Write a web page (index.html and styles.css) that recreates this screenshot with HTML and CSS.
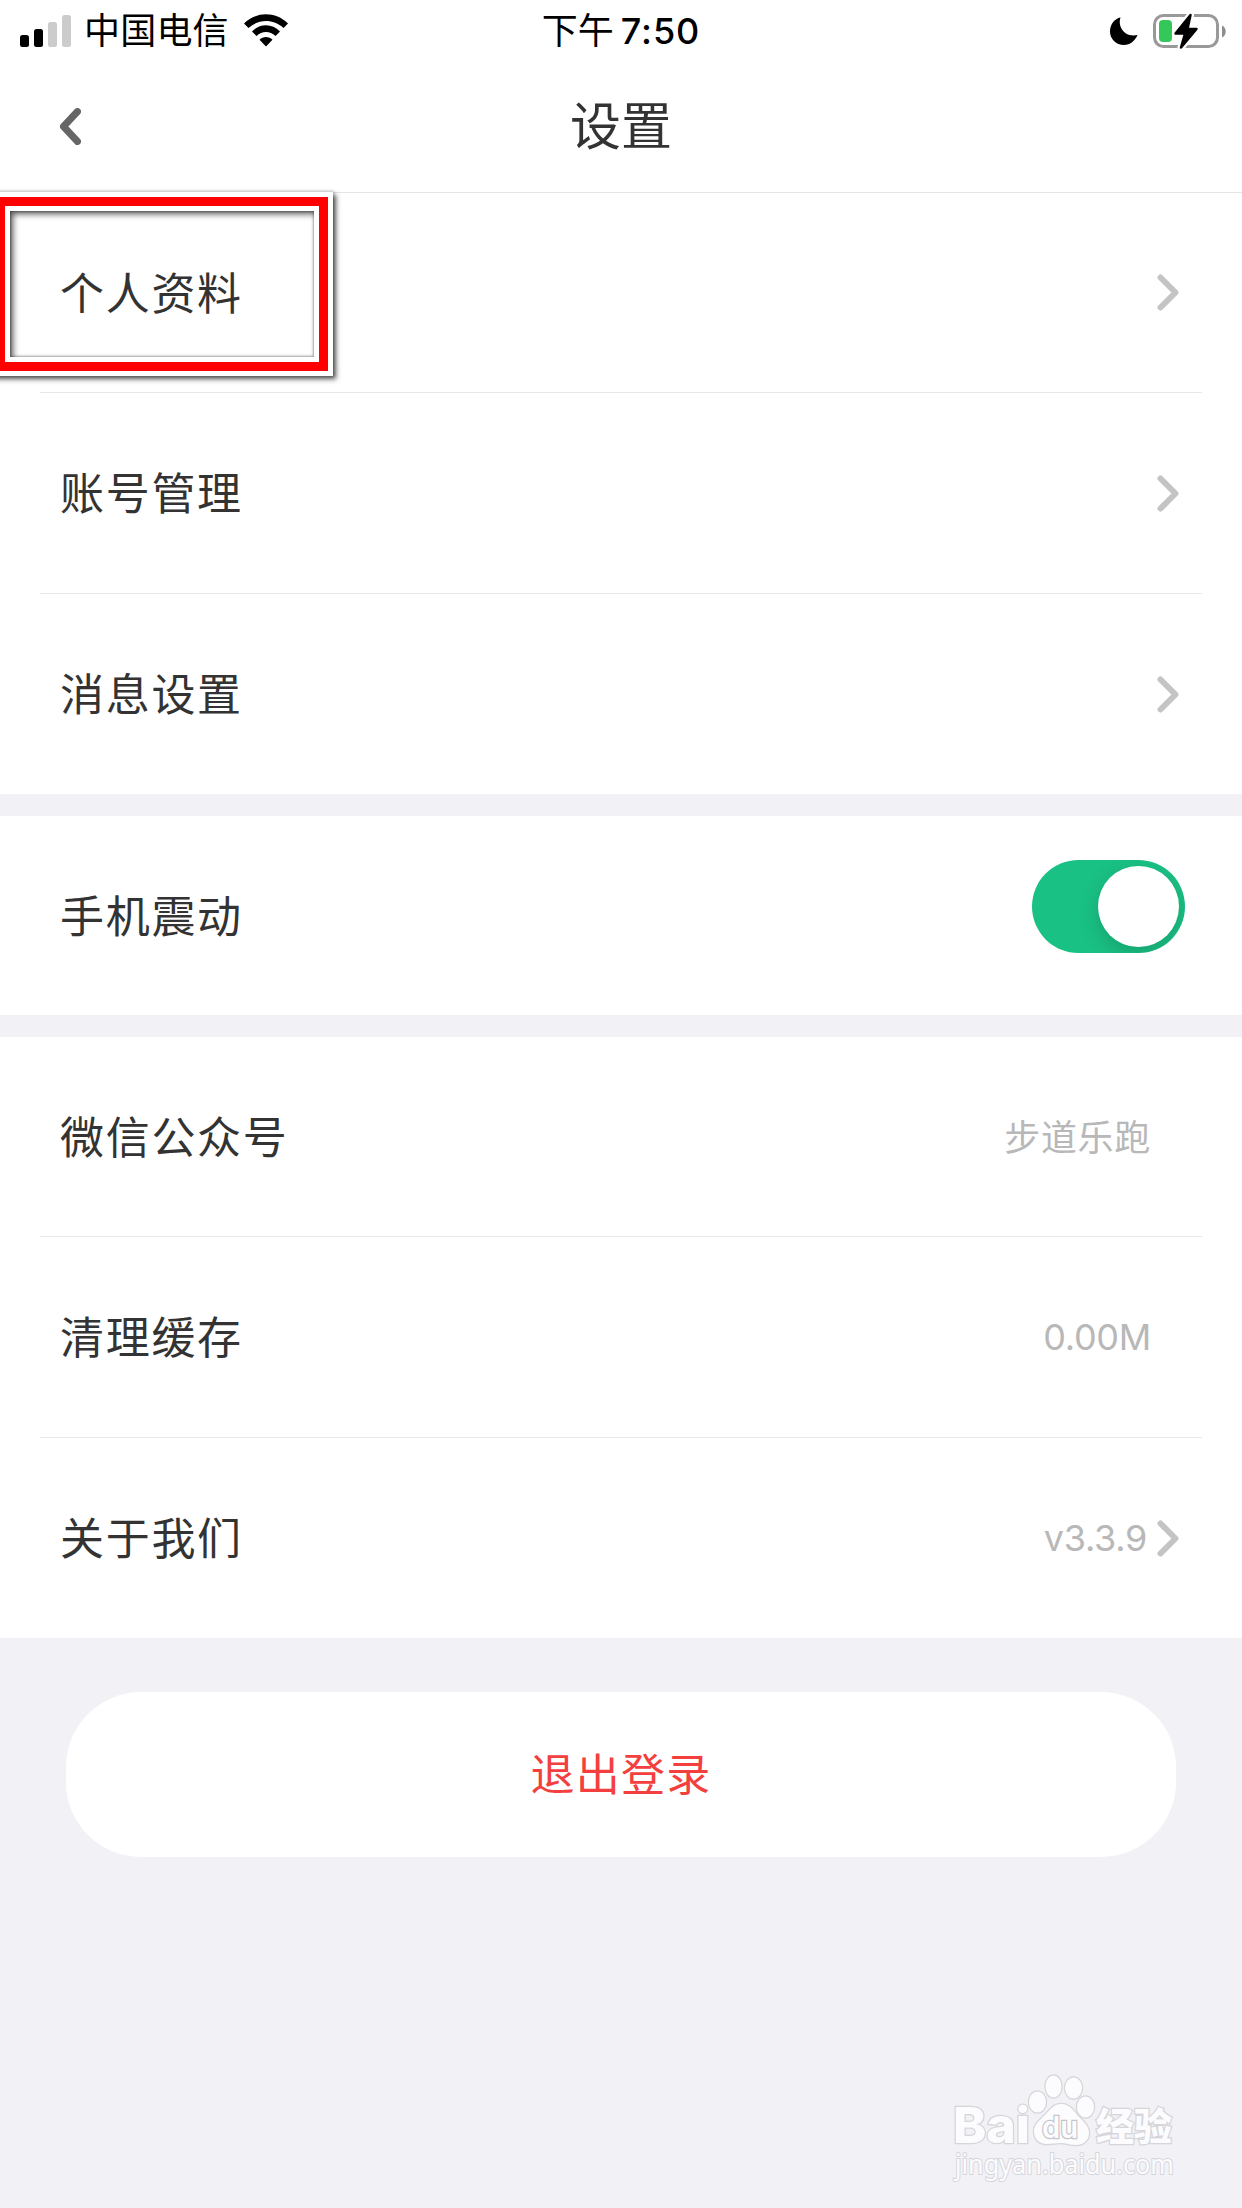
FILE: index.html
```
<!DOCTYPE html>
<html lang="zh-CN">
<head>
  <meta charset="UTF-8">
  <meta name="viewport" content="width=device-width, initial-scale=1.0">
  <title>设置</title>
  <link rel="stylesheet" href="styles.css">
</head>
<body>
  <div class="status-bar">
    <div class="status-left">
      <svg class="signal" width="51" height="32" viewBox="0 0 51 32">
        <rect x="0" y="20" width="9" height="12" rx="2.5"/>
        <rect x="14" y="14" width="9" height="18" rx="2.5"/>
        <rect class="off" x="28" y="7" width="9" height="25" rx="2.5"/>
        <rect class="off" x="42" y="0" width="9" height="32" rx="2.5"/>
      </svg>
      <span class="carrier">中国电信</span>
      <svg class="wifi" width="46" height="33" viewBox="0 0 46 33">
        <path d="M1 9.5C13.500-2.700 32.500-2.700 45 9.500L40.500 14C30.500 4.800 15.500 4.800 5.500 14Z"/>
        <path d="M9 17.500C17 9 29 9 37 17.500L32.500 22C27 16.800 19 16.800 13.500 22Z"/>
        <path d="M16.500 25.700C20 22 26 22 29.500 25.700L23 32.500Z"/>
      </svg>
    </div>
    <div class="status-time">下午<span>7:50</span></div>
    <div class="status-right">
      <svg width="28" height="28" viewBox="0 0 28 28">
        <path d="M10.500 0.500C7.500 9 14 21 27.500 18C25 24 20 28 14 28C6 28 0 22 0 14.500C0 7.500 4.500 1.500 10.500 0.500Z"/>
      </svg>
      <svg width="74" height="36" viewBox="0 0 74 36">
        <rect x="1.500" y="2.500" width="63" height="31" rx="9" fill="none" stroke="#999" stroke-width="3"/>
        <path d="M69 12.500C74 14.500 74 22.500 69 24.500Z" fill="#8e8e8e"/>
        <rect x="6" y="7" width="13" height="22" rx="4" fill="#34c759"/>
        <path d="M37.500 2L22.500 20.500H32L28 34.500L43.500 16H34.500Z" fill="#000" stroke="#fff" stroke-width="7" stroke-linejoin="round"/>
        <path d="M37.500 2L22.500 20.500H32L28 34.500L43.500 16H34.500Z" stroke="#000" stroke-width="2.500" stroke-linejoin="round"/>
      </svg>
    </div>
  </div>

  <div class="nav-bar">
    <svg class="back" width="22" height="37" viewBox="0 0 22 37"><path d="M18.500 3.500L4.500 18.500L18.500 33.500"/></svg>
    <h1>设置</h1>
  </div>

  <div class="group">
    <div class="row">
      <span class="label">个人资料</span>
      <svg class="arrow" width="22" height="37" viewBox="0 0 22 37"><path d="M3.500 3.500L18.500 18.500L3.500 33.500"/></svg>
      <div class="highlight"></div>
    </div>
    <div class="row">
      <span class="label">账号管理</span>
      <svg class="arrow" width="22" height="37" viewBox="0 0 22 37"><path d="M3.500 3.500L18.500 18.500L3.500 33.500"/></svg>
    </div>
    <div class="row">
      <span class="label">消息设置</span>
      <svg class="arrow" width="22" height="37" viewBox="0 0 22 37"><path d="M3.500 3.500L18.500 18.500L3.500 33.500"/></svg>
    </div>
  </div>

  <div class="group">
    <div class="row row-switch">
      <span class="label">手机震动</span>
      <div class="switch"><div class="knob"></div></div>
    </div>
  </div>

  <div class="group">
    <div class="row">
      <span class="label">微信公众号</span>
      <span class="value account">步道乐跑</span>
    </div>
    <div class="row">
      <span class="label">清理缓存</span>
      <span class="value">0.00M</span>
    </div>
    <div class="row">
      <span class="label">关于我们</span>
      <span class="value version">v3.3.9</span>
      <svg class="arrow" width="22" height="37" viewBox="0 0 22 37"><path d="M3.500 3.500L18.500 18.500L3.500 33.500"/></svg>
    </div>
  </div>

  <button class="logout">退出登录</button>

  <svg class="watermark" width="290" height="158" viewBox="0 0 290 158">
    <text class="wm-bold" x="23" y="93" font-size="50" textLength="77" lengthAdjust="spacingAndGlyphs">Bai</text>
    <ellipse cx="107.500" cy="52" rx="8.500" ry="10.500"/>
    <ellipse cx="123.500" cy="36.500" rx="8" ry="11"/>
    <ellipse cx="143.500" cy="38" rx="8.500" ry="10.500"/>
    <ellipse cx="155.500" cy="57" rx="8.500" ry="10.500"/>
    <path d="M131 54C140 54 144 61 149 67C154 72 159 76 159 83C159 91 153 95 146 95C140 95 136 93 131 93C126 93 122 94 117 94C109 94 104 89 104 81C104 74 110 70 115 65C120 60 123 54 131 54Z"/>
    <text class="wm-du" x="112" y="88" font-size="30" textLength="36" lengthAdjust="spacingAndGlyphs">du</text>
    <text class="wm-cjk" x="166" y="90" font-size="38" textLength="76" lengthAdjust="spacingAndGlyphs">经验</text>
    <text class="wm-url" x="25" y="123.500" font-size="27" textLength="219" lengthAdjust="spacingAndGlyphs">jingyan.baidu.com</text>
  </svg>
</body>
</html>
```
FILE: styles.css
```
* {
  box-sizing: border-box;
}

body {
  position: relative;
  margin: 0;
  height: 2208px;
  overflow: hidden;
  background: #f2f1f6;
  color: #333;
  font-family: Inter, "Noto Sans CJK SC", sans-serif;
}

svg {
  display: block;
  flex: none;
}

.status-bar {
  display: grid;
  grid-template-columns: 1fr auto 1fr;
  align-items: center;
  height: 60px;
  padding: 0 15px 0 20px;
  background: #fff;
  color: #000;
  font-size: 36px;
  line-height: 60px;
}

.status-left,
.status-right {
  display: flex;
  align-items: center;
}

.signal .off {
  fill: #ccc;
}

.carrier {
  margin: 1px 14px 0 13px;
  letter-spacing: 0.2px;
}

.status-time {
  display: flex;
  padding-right: 5px;
}

.status-time span {
  margin-left: 7px;
  font-weight: 500;
  letter-spacing: 0.9px;
}

.status-right {
  justify-content: flex-end;
  gap: 15px;
}

.nav-bar {
  display: flex;
  align-items: center;
  height: 133px;
  padding: 1px 59px 0;
  border-bottom: 1px solid #e4e4e6;
  background: #fff;
}

.back {
  fill: none;
  stroke: #666;
  stroke-width: 7;
  stroke-linecap: round;
  stroke-linejoin: round;
}

h1 {
  flex: 1;
  margin: 0 22px 0 0;
  text-align: center;
  font-size: 51px;
  font-weight: 400;
  line-height: 70px;
}

.group {
  margin-bottom: 22px;
  padding: 0 40px;
  background: #fff;
}

.row {
  position: relative;
  display: flex;
  align-items: center;
  height: 201px;
  padding: 0 23px 0 20px;
  border-bottom: 1px solid #e8e8ea;
}

.row:first-child,
.row:last-child {
  height: 200px;
}

.row:last-child {
  border-bottom: none;
}

.row.row-switch {
  height: 199px;
  padding-right: 17px;
}

.label {
  flex: 1;
  padding-bottom: 4px;
  font-size: 44px;
  letter-spacing: 1.7px;
}

.value {
  margin-right: 28px;
  color: #b8b8b8;
  font-size: 36px;
  letter-spacing: -0.3px;
}

.account {
  padding-bottom: 4px;
  letter-spacing: 0.7px;
}

.version {
  margin-right: 10px;
}

.arrow {
  fill: none;
  stroke: #c4c4c6;
  stroke-width: 6;
  stroke-linecap: round;
  stroke-linejoin: round;
}

.switch {
  width: 153px;
  height: 93px;
  margin-bottom: 18px;
  padding: 6px;
  overflow: hidden;
  border-radius: 47px;
  background: #1ac184;
}

.knob {
  width: 81px;
  height: 81px;
  margin-left: auto;
  border-radius: 50%;
  background: #fff;
  box-shadow: 0 7px 20px rgba(0, 0, 0, 0.17);
}

/* red frame around the first row's label */
.highlight {
  position: absolute;
  top: 4px;
  left: -44px;
  width: 332px;
  height: 174px;
  border: 9px solid #f00;
  box-shadow:
    0 0 0 5px #fff,
    0 0 3px 6px rgba(0, 0, 0, 0.2),
    3px 3px 5px 5px rgba(0, 0, 0, 0.65),
    inset 0 0 0 5px #fff,
    inset 0 0 2px 6px rgba(0, 0, 0, 0.25),
    inset 3px 3px 6px 5px rgba(0, 0, 0, 0.65);
}

.logout {
  display: block;
  width: 1110px;
  height: 165px;
  margin: 54px auto 0;
  padding: 0 0 5px;
  border: none;
  border-radius: 75px;
  background: #fff;
  color: #f43f3f;
  font-family: inherit;
  font-size: 44px;
  letter-spacing: 1.2px;
}

.watermark {
  position: absolute;
  left: 930px;
  top: 2050px;
  fill: #fcfcfe;
  stroke: #d5d5da;
  stroke-width: 2.5px;
  paint-order: stroke;
}

.wm-bold {
  font-weight: 800;
}

.wm-du {
  stroke: #c4c4ca;
  font-weight: 600;
}

.wm-cjk {
  font-family: "Noto Sans CJK SC", sans-serif;
  font-weight: 900;
}

.wm-url {
  font-family: "Noto Sans", sans-serif;
  stroke-width: 2px;
}
```
